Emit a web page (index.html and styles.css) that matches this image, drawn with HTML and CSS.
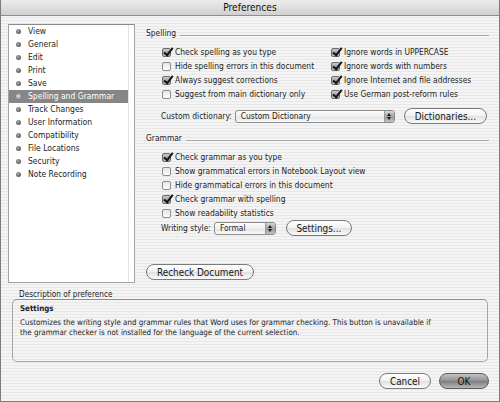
FILE: index.html
```html
<!DOCTYPE html>
<html>
<head>
<meta charset="utf-8">
<title>Preferences</title>
<link rel="stylesheet" href="styles.css">
</head>
<body>
<div class="window">
  <div class="titlebar">Preferences</div>
  <div class="content">
    <div class="top">
      <div class="sidebar">
        <ul class="list">
          <li><span class="dot"></span>View</li>
          <li><span class="dot"></span>General</li>
          <li><span class="dot"></span>Edit</li>
          <li><span class="dot"></span>Print</li>
          <li><span class="dot"></span>Save</li>
          <li class="selected"><span class="dot"></span>Spelling and Grammar</li>
          <li><span class="dot"></span>Track Changes</li>
          <li><span class="dot"></span>User Information</li>
          <li><span class="dot"></span>Compatibility</li>
          <li><span class="dot"></span>File Locations</li>
          <li><span class="dot"></span>Security</li>
          <li><span class="dot"></span>Note Recording</li>
        </ul>
      </div>
      <div class="main">
        <div class="group-head"><span>Spelling</span><span class="rule"></span></div>
        <div class="checks two-col">
          <div class="check"><span class="box on"></span>Check spelling as you type</div>
          <div class="check"><span class="box on"></span>Ignore words in UPPERCASE</div>
          <div class="check"><span class="box"></span>Hide spelling errors in this document</div>
          <div class="check"><span class="box on"></span>Ignore words with numbers</div>
          <div class="check"><span class="box on"></span>Always suggest corrections</div>
          <div class="check"><span class="box on"></span>Ignore Internet and file addresses</div>
          <div class="check"><span class="box"></span>Suggest from main dictionary only</div>
          <div class="check"><span class="box on"></span>Use German post-reform rules</div>
        </div>
        <div class="field-row">
          <span class="field-label">Custom dictionary:</span>
          <span class="popup popup-dict"><span class="popup-text">Custom Dictionary</span><span class="arrows"><span class="up"></span><span class="down"></span></span></span>
          <span class="btn btn-dict">Dictionaries...</span>
        </div>
        <div class="group-head grammar-head"><span>Grammar</span><span class="rule"></span></div>
        <div class="checks">
          <div class="check"><span class="box on"></span>Check grammar as you type</div>
          <div class="check"><span class="box"></span>Show grammatical errors in Notebook Layout view</div>
          <div class="check"><span class="box"></span>Hide grammatical errors in this document</div>
          <div class="check"><span class="box on"></span>Check grammar with spelling</div>
          <div class="check"><span class="box"></span>Show readability statistics</div>
        </div>
        <div class="field-row style-row">
          <span class="field-label">Writing style:</span>
          <span class="popup popup-style"><span class="popup-text">Formal</span><span class="arrows"><span class="up"></span><span class="down"></span></span></span>
          <span class="btn btn-settings">Settings...</span>
        </div>
        <span class="btn btn-recheck">Recheck Document</span>
      </div>
    </div>
    <div class="desc-label">Description of preference</div>
    <div class="desc-box">
      <div class="desc-title">Settings</div>
      <div class="desc-text">Customizes the writing style and grammar rules that Word uses for grammar checking. This button is unavailable if<br>the grammar checker is not installed for the language of the current selection.</div>
    </div>
    <div class="actions">
      <span class="btn btn-cancel">Cancel</span>
      <span class="btn btn-ok">OK</span>
    </div>
  </div>
</div>
</body>
</html>
```
FILE: styles.css
```css
* { box-sizing: border-box; }
html, body { margin: 0; padding: 0; }
body {
  width: 500px;
  height: 402px;
  overflow: hidden;
  background: #fff;
  font-family: "DejaVu Sans Condensed", "DejaVu Sans", sans-serif;
  font-size: 8.4px;
  color: #1c1c1c;
}
.window {
  width: 500px;
  height: 402px;
  border: 1px solid #7c7c7c;
  border-top: none;
  display: flex;
  flex-direction: column;
  background: repeating-linear-gradient(to bottom, #f4f4f4 0, #f4f4f4 2px, #e8e8e8 2px, #e8e8e8 3px);
}
.titlebar {
  flex: none;
  height: 16px;
  line-height: 15px;
  text-align: center;
  font-size: 10.1px;
  color: #111;
  background: linear-gradient(#ececec, #d0d0d0);
  border-bottom: 1px solid #8e8e8e;
}
.content {
  flex: 1;
  padding: 8px 10px 0 7px;
  display: flex;
  flex-direction: column;
}
.top {
  display: flex;
  gap: 11px;
  height: 259px;
  flex: none;
}
.sidebar {
  width: 127px;
  height: 259px;
  flex: none;
  background: #fff;
  border: 1px solid #a2a2a2;
  border-top-color: #8a8a8a;
}
.list {
  list-style: none;
  margin: 0;
  padding: 0;
  width: 120px;
  height: 100%;
  border-right: 1px solid #e2e2e2;
  font-size: 8.5px;
}
.list li {
  height: 13px;
  line-height: 13px;
  display: flex;
  align-items: center;
  padding-left: 7px;
  gap: 7px;
  color: #1c1c1c;
  white-space: nowrap;
}
.dot {
  width: 5px;
  height: 5px;
  border-radius: 50%;
  background: radial-gradient(circle at 40% 35%, #a8a8a8, #5e5e5e 70%);
  flex: none;
}
.list li.selected {
  background: #868686;
  color: #fff;
}
.list li.selected .dot {
  background: radial-gradient(circle at 40% 35%, #dcdcdc, #a4a4a4 70%);
}
.main {
  flex: 1;
  padding-top: 4px;
  display: flex;
  flex-direction: column;
  align-items: flex-start;
}
.group-head {
  display: flex;
  align-items: flex-end;
  width: 100%;
  height: 11px;
  line-height: 11px;
  color: #1c1c1c;
}
.group-head .rule {
  flex: 1;
  margin-left: 4px;
  margin-bottom: 2px;
  border-top: 1px solid #a9a9a9;
  border-bottom: 1px solid #fbfbfb;
}
.grammar-head { margin-top: 9px; }
.checks {
  margin-top: 6px;
  padding-left: 16px;
  display: grid;
  grid-template-columns: auto;
}
.checks.two-col { grid-template-columns: 169px auto; }
.check {
  height: 14px;
  display: flex;
  align-items: center;
  gap: 4px;
  white-space: nowrap;
}
.box {
  position: relative;
  width: 9px;
  height: 9px;
  flex: none;
  border: 1px solid #8c8c8c;
  border-radius: 2px;
  background: linear-gradient(#e6e6e6, #fdfdfd);
}
.box.on {
  border-color: #6a6a6a;
  background: linear-gradient(#cfcfcf, #9c9c9c 55%, #c2c2c2);
}
.box.on::after {
  content: "";
  position: absolute;
  left: 2.5px;
  top: -3px;
  width: 3px;
  height: 8px;
  border-right: 2px solid #151515;
  border-bottom: 2px solid #151515;
  transform: rotate(38deg);
}
.field-row {
  display: flex;
  align-items: center;
  height: 16px;
  margin-top: 7px;
  padding-left: 15px;
  white-space: nowrap;
}
.style-row { margin-top: 0; }
.field-label { margin-right: 3px; }
.popup {
  display: flex;
  align-items: center;
  height: 13px;
  border: 1px solid #8c8c8c;
  border-radius: 3px;
  background: linear-gradient(#ffffff, #eeeeee 50%, #e3e3e3 51%, #fafafa);
  overflow: hidden;
}
.popup-text {
  flex: 1;
  padding-left: 5px;
  font-size: 8.4px;
  line-height: 11px;
}
.arrows {
  width: 10px;
  height: 100%;
  border-left: 1px solid #9a9a9a;
  background: linear-gradient(#d6d6d6, #a4a4a4 50%, #959595 51%, #c4c4c4);
  display: flex;
  flex-direction: column;
  align-items: center;
  justify-content: center;
  gap: 1px;
}
.arrows .up {
  width: 0;
  height: 0;
  border-left: 2px solid transparent;
  border-right: 2px solid transparent;
  border-bottom: 3px solid #1a1a1a;
}
.arrows .down {
  width: 0;
  height: 0;
  border-left: 2px solid transparent;
  border-right: 2px solid transparent;
  border-top: 3px solid #1a1a1a;
}
.popup-dict { width: 160px; }
.popup-style { width: 62px; }
.btn {
  display: inline-flex;
  align-items: center;
  justify-content: center;
  height: 16px;
  border: 1px solid #7a7a7a;
  border-radius: 8px;
  background: linear-gradient(#ffffff, #f1f1f1 50%, #e0e0e0 51%, #fbfbfb);
  font-size: 9.9px;
  color: #161616;
  white-space: nowrap;
  flex: none;
}
.btn-dict { width: 83px; margin-left: 9px; }
.btn-settings { width: 66px; margin-left: 10px; }
.btn-recheck { width: 108px; margin-top: 28px; }
.desc-label {
  margin-top: 6px;
  padding-left: 11px;
  height: 10px;
  line-height: 10px;
  font-size: 8.2px;
  color: #1c1c1c;
}
.desc-box {
  margin: 0 1px 0 4px;
  height: 63px;
  border: 1px solid #a6a6a6;
  border-top-color: #8e8e8e;
  border-radius: 5px;
  padding: 4px 7px;
  font-size: 7.9px;
  line-height: 10px;
  color: #1c1c1c;
}
.desc-title { font-weight: bold; }
.desc-text { margin-top: 3.5px; white-space: nowrap; }
.actions {
  margin-top: 11px;
  display: flex;
  justify-content: flex-end;
  gap: 8px;
}
.btn-cancel { width: 52px; }
.btn-ok {
  width: 50px;
  border-color: #5e5e5e;
  background: linear-gradient(#c4c4c4, #8e8e8e 50%, #7c7c7c 51%, #b8b8b8);
  color: #111;
}
```
